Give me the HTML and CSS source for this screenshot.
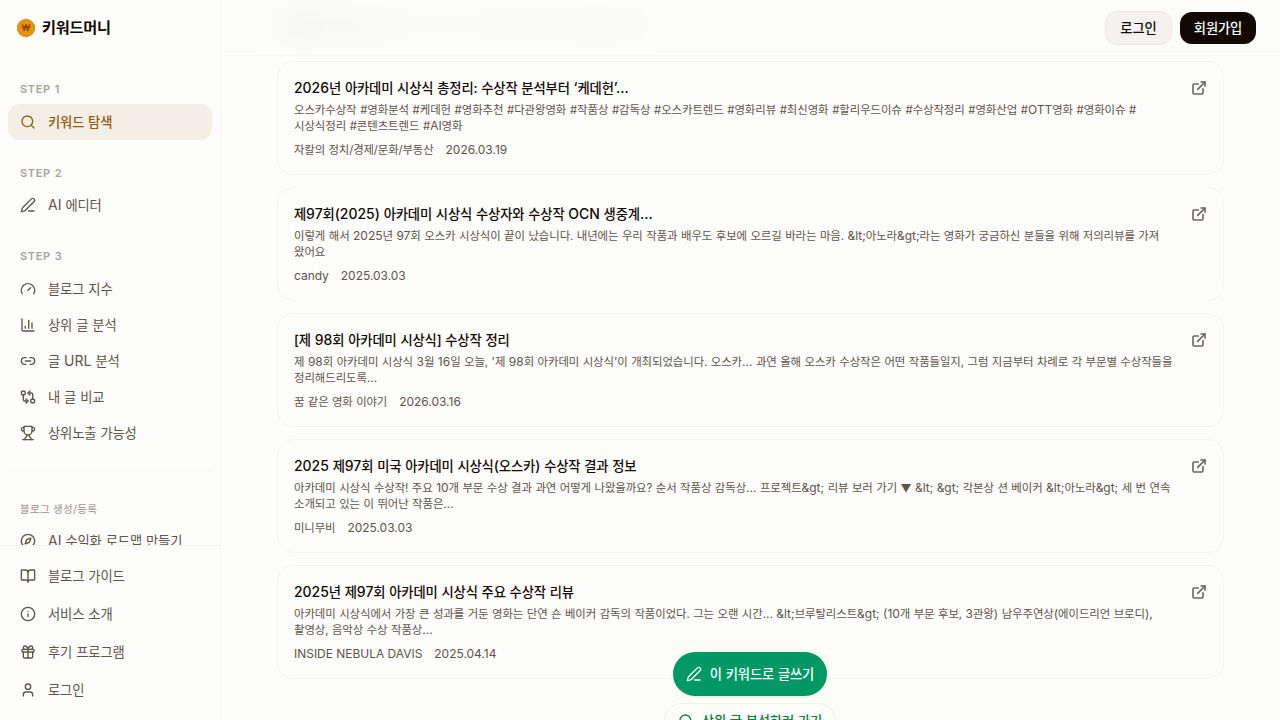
FILE: index.html
```
<!DOCTYPE html>
<html lang="ko">
<head>
    <meta charset="UTF-8">
    <title>키워드머니</title>
    <link rel="stylesheet" href="styles.css">
</head>
<body>
    <svg width="0" height="0" class="sprite">
        <symbol id="search" viewBox="0 0 24 24"><circle cx="11" cy="11" r="8"/><path d="m21 21-4.34-4.34"/></symbol>
        <symbol id="pen" viewBox="0 0 24 24"><path d="M13 21h8"/><path d="M21.174 6.812a1 1 0 0 0-3.986-3.987L3.842 16.174a2 2 0 0 0-.5.83l-1.321 4.352a.5.5 0 0 0 .623.622l4.353-1.32a2 2 0 0 0 .83-.497z"/></symbol>
        <symbol id="gauge" viewBox="0 0 24 24"><path d="m12 14 4-4"/><path d="M3.34 19a10 10 0 1 1 17.32 0"/></symbol>
        <symbol id="chart" viewBox="0 0 24 24"><path d="M3 3v16a2 2 0 0 0 2 2h16"/><path d="M18 17V9"/><path d="M13 17V5"/><path d="M8 17v-3"/></symbol>
        <symbol id="link" viewBox="0 0 24 24"><path d="M9 17H7A5 5 0 0 1 7 7h2"/><path d="M15 7h2a5 5 0 1 1 0 10h-2"/><path d="M8 12h8"/></symbol>
        <symbol id="compare" viewBox="0 0 24 24"><circle cx="5" cy="6" r="3"/><path d="M12 6h5a2 2 0 0 1 2 2v7"/><path d="m15 9-3-3 3-3"/><circle cx="19" cy="18" r="3"/><path d="M12 18H7a2 2 0 0 1-2-2V9"/><path d="m9 15 3 3-3 3"/></symbol>
        <symbol id="trophy" viewBox="0 0 24 24"><path d="M6 9H4.5a2.5 2.5 0 0 1 0-5H6"/><path d="M18 9h1.5a2.5 2.5 0 0 0 0-5H18"/><path d="M4 22h16"/><path d="M10 14.66V17c0 .55-.47.98-.97 1.21C7.85 18.75 7 20.24 7 22"/><path d="M14 14.66V17c0 .55.47.98.97 1.21C16.15 18.75 17 20.24 17 22"/><path d="M18 2H6v7a6 6 0 0 0 12 0V2Z"/></symbol>
        <symbol id="compass" viewBox="0 0 24 24"><circle cx="12" cy="12" r="10"/><path d="m16.24 7.76-1.804 5.411a2 2 0 0 1-1.265 1.265L7.76 16.24l1.804-5.411a2 2 0 0 1 1.265-1.265z"/></symbol>
        <symbol id="book" viewBox="0 0 24 24"><path d="M12 7v14"/><path d="M3 18a1 1 0 0 1-1-1V4a1 1 0 0 1 1-1h5a4 4 0 0 1 4 4 4 4 0 0 1 4-4h5a1 1 0 0 1 1 1v13a1 1 0 0 1-1 1h-6a3 3 0 0 0-3 3 3 3 0 0 0-3-3z"/></symbol>
        <symbol id="info" viewBox="0 0 24 24"><circle cx="12" cy="12" r="10"/><path d="M12 16v-4"/><path d="M12 8h.01"/></symbol>
        <symbol id="gift" viewBox="0 0 24 24"><rect x="3" y="8" width="18" height="4" rx="1"/><path d="M12 8v13"/><path d="M19 12v7a2 2 0 0 1-2 2H7a2 2 0 0 1-2-2v-7"/><path d="M7.5 8a2.5 2.5 0 0 1 0-5A4.8 8 0 0 1 12 8a4.8 8 0 0 1 4.5-5 2.5 2.5 0 0 1 0 5"/></symbol>
        <symbol id="user" viewBox="0 0 24 24"><path d="M19 21v-2a4 4 0 0 0-4-4H9a4 4 0 0 0-4 4v2"/><circle cx="12" cy="7" r="4"/></symbol>
        <symbol id="external" viewBox="0 0 24 24"><path d="M15 3h6v6"/><path d="M10 14 21 3"/><path d="M18 13v6a2 2 0 0 1-2 2H5a2 2 0 0 1-2-2V8a2 2 0 0 1 2-2h6"/></symbol>
    </svg>

    <aside class="sidebar">
        <div class="brand"><span class="coin">₩</span>키워드머니</div>
        <nav class="menu">
            <div class="label">STEP 1</div>
            <a class="item active"><svg class="icon"><use href="#search"/></svg>키워드 탐색</a>
            <div class="label tight">STEP 2</div>
            <a class="item"><svg class="icon"><use href="#pen"/></svg><span><span class="en">AI</span> 에디터</span></a>
            <div class="label">STEP 3</div>
            <a class="item"><svg class="icon"><use href="#gauge"/></svg>블로그 지수</a>
            <a class="item"><svg class="icon"><use href="#chart"/></svg>상위 글 분석</a>
            <a class="item"><svg class="icon"><use href="#link"/></svg><span>글 <span class="en">URL</span> 분석</span></a>
            <a class="item"><svg class="icon"><use href="#compare"/></svg>내 글 비교</a>
            <a class="item"><svg class="icon"><use href="#trophy"/></svg>상위노출 가능성</a>
            <hr class="divider">
            <div class="label ko">블로그 생성/등록</div>
            <a class="item"><svg class="icon"><use href="#compass"/></svg><span><span class="en">AI</span> 수익화 로드맵 만들기</span></a>
        </nav>
        <div class="bottom">
            <a class="item"><svg class="icon"><use href="#book"/></svg>블로그 가이드</a>
            <a class="item"><svg class="icon"><use href="#info"/></svg>서비스 소개</a>
            <a class="item"><svg class="icon"><use href="#gift"/></svg>후기 프로그램</a>
            <a class="item"><svg class="icon"><use href="#user"/></svg>로그인</a>
        </div>
    </aside>

    <main class="main">
        <header class="header">
            <div class="haze"></div>
            <button class="btn login">로그인</button>
            <button class="btn signup">회원가입</button>
        </header>
        <section class="posts">
            <article class="card">
                <div class="text">
                    <h3><span class="en">2026</span>년 아카데미 시상식 총정리: 수상작 분석부터 <span class="en">‘</span>케데헌<span class="en">’...</span></h3>
                    <p class="tags">오스카수상작 #영화분석 #케데헌 #영화추천 #다관왕영화 #작품상 #감독상 #오스카트렌드 #영화리뷰 #최신영화 #할리우드이슈 #수상작정리 #영화산업 #<span class="en">OTT</span>영화 #영화이슈 #<br>시상식정리 #콘텐츠트렌드 #<span class="en">AI</span>영화</p>
                    <div class="meta"><span>자칼의 정치/경제/문화/부동산</span><span class="en">2026.03.19</span></div>
                </div>
                <svg class="icon"><use href="#external"/></svg>
            </article>
            <article class="card">
                <div class="text">
                    <h3>제<span class="en">97</span>회<span class="en">(2025)</span> 아카데미 시상식 수상자와 수상작 <span class="en">OCN</span> 생중계<span class="en">...</span></h3>
                    <p>이렇게 해서 <span class="en">2025</span>년 <span class="en">97</span>회 오스카 시상식이 끝이 났습니다. 내년에는 우리 작품과 배우도 후보에 오르길 바라는 마음. <span class="en">&amp;lt;</span>아노라<span class="en">&amp;gt;</span>라는 영화가 궁금하신 분들을 위해 저의리뷰를 가져<br>왔어요</p>
                    <div class="meta"><span class="en">candy</span><span class="en">2025.03.03</span></div>
                </div>
                <svg class="icon"><use href="#external"/></svg>
            </article>
            <article class="card">
                <div class="text">
                    <h3>[제 <span class="en">98</span>회 아카데미 시상식] 수상작 정리</h3>
                    <p>제 <span class="en">98</span>회 아카데미 시상식 <span class="en">3</span>월 <span class="en">16</span>일 오늘, '제 <span class="en">98</span>회 아카데미 시상식'이 개최되었습니다. 오스카<span class="en">...</span> 과연 올해 오스카 수상작은 어떤 작품들일지, 그럼 지금부터 차례로 각 부문별 수상작들을<br>정리해드리도록<span class="en">...</span></p>
                    <div class="meta"><span>꿈 같은 영화 이야기</span><span class="en">2026.03.16</span></div>
                </div>
                <svg class="icon"><use href="#external"/></svg>
            </article>
            <article class="card">
                <div class="text">
                    <h3><span class="en">2025</span> 제<span class="en">97</span>회 미국 아카데미 시상식<span class="en">(</span>오스카<span class="en">)</span> 수상작 결과 정보</h3>
                    <p>아카데미 시상식 수상작! 주요 <span class="en">10</span>개 부문 수상 결과 과연 어떻게 나왔을까요? 순서 작품상 감독상<span class="en">...</span> 프로젝트<span class="en">&amp;gt;</span> 리뷰 보러 가기 <span class="mark">▼</span> <span class="en">&amp;lt; &amp;gt;</span> 각본상 션 베이커 <span class="en">&amp;lt;</span>아노라<span class="en">&amp;gt;</span> 세 번 연속<br>소개되고 있는 이 뛰어난 작품은<span class="en">...</span></p>
                    <div class="meta"><span>미니무비</span><span class="en">2025.03.03</span></div>
                </div>
                <svg class="icon"><use href="#external"/></svg>
            </article>
            <article class="card">
                <div class="text">
                    <h3><span class="en">2025</span>년 제<span class="en">97</span>회 아카데미 시상식 주요 수상작 리뷰</h3>
                    <p>아카데미 시상식에서 가장 큰 성과를 거둔 영화는 단연 숀 베이커 감독의 작품이었다. 그는 오랜 시간<span class="en">... &amp;lt;</span>브루탈리스트<span class="en">&amp;gt; (10</span>개 부문 후보, <span class="en">3</span>관왕<span class="en">)</span> 남우주연상<span class="en">(</span>에이드리언 브로디<span class="en">),</span><br>촬영상, 음악상 수상 작품상<span class="en">...</span></p>
                    <div class="meta"><span class="en">INSIDE NEBULA DAVIS</span><span class="en">2025.04.14</span></div>
                </div>
                <svg class="icon"><use href="#external"/></svg>
            </article>
        </section>
    </main>

    <div class="floating">
        <button class="pill write"><svg class="icon"><use href="#pen"/></svg>이 키워드로 글쓰기</button>
        <button class="pill analyze"><svg class="icon"><use href="#search"/></svg>상위 글 분석하러 가기</button>
    </div>
</body>
</html>
```
FILE: styles.css
```
* {
    box-sizing: border-box;
}

body {
    margin: 0;
    height: 720px;
    display: flex;
    overflow: hidden;
    background-color: #fcfcfa;
    color: #110a04;
    font-family: Inter, "Noto Sans CJK KR", sans-serif;
    font-size: 13.3px;
    line-height: 20px;
    letter-spacing: -0.01em;
    word-spacing: 0.03em;
}

/* latin letters and digits run a little larger than hangul */
.en {
    font-size: 1.05em;
    letter-spacing: 0;
    word-spacing: 0;
}

.mark {
    font-size: 0.95em;
    line-height: 1;
}

.sprite {
    position: absolute;
}

.icon {
    width: 16px;
    height: 16px;
    flex-shrink: 0;
    fill: none;
    stroke: currentColor;
    stroke-width: 2;
    stroke-linecap: round;
    stroke-linejoin: round;
}

.sidebar {
    width: 221px;
    height: 720px;
    flex-shrink: 0;
    display: flex;
    flex-direction: column;
    border-right: 1px solid #f7f7f5;
}

.brand {
    height: 56px;
    flex-shrink: 0;
    display: flex;
    align-items: center;
    gap: 7px;
    padding-left: 17px;
    font-size: 15.2px;
    font-weight: 700;
    letter-spacing: -0.015em;
}

.coin {
    width: 18px;
    height: 18px;
    border-radius: 50%;
    background-color: #e6930f;
    box-shadow: inset 0 0 0 1px #dc8a10;
    color: #8a4708;
    font-size: 8.5px;
    line-height: 18px;
    text-align: center;
    letter-spacing: 0;
}

.menu {
    flex: 1;
    min-height: 0;
    overflow: hidden;
    padding: 0 8px;
}

.label {
    padding: 25px 12px 7px;
    color: #a8a49c;
    font-size: 11px;
    font-weight: 600;
    line-height: 16px;
    letter-spacing: 0.06em;
}

.label.tight {
    padding-bottom: 6px;
}

.label.ko {
    padding: 26px 12px 5px;
    font-size: 10.5px;
    font-weight: 500;
    letter-spacing: 0.03em;
    word-spacing: 0;
}

.item {
    height: 36px;
    display: flex;
    align-items: center;
    gap: 12px;
    padding: 0 12px;
    border-radius: 12px;
    color: #5c5549;
}

.item.active {
    background-color: #f3eee6;
    color: #945b09;
    font-weight: 500;
}

.divider {
    height: 1px;
    margin: 20px 0 4px;
    border: none;
    background-color: #f6f6f4;
}

.bottom {
    display: flex;
    flex-direction: column;
    gap: 2px;
    padding: 12px 8px;
    border-top: 1px solid #f4f4f2;
}

.main {
    flex: 1;
    min-width: 0;
}

.header {
    position: relative;
    height: 56px;
    display: flex;
    align-items: center;
    justify-content: flex-end;
    gap: 8px;
    padding-right: 24px;
    border-bottom: 1px solid #f7f7f5;
    overflow: hidden;
}

/* content scrolled under the translucent header */
.haze {
    position: absolute;
    left: 60px;
    top: 14px;
    width: 360px;
    height: 22px;
    background: linear-gradient(90deg, #f4f4f2, #f9f9f7 40%, #f7f7f5);
    filter: blur(12px);
}

.btn {
    border: none;
    border-radius: 12px;
    padding: 0;
    font: inherit;
    font-weight: 500;
    letter-spacing: inherit;
}

.login {
    width: 67px;
    height: 34px;
    border: 1px solid #e9e8e4;
    background-color: #f3f2ef;
    color: #110a04;
}

.signup {
    width: 76px;
    height: 32px;
    background-color: #110a04;
    color: #fcfcfa;
}

.posts {
    display: flex;
    flex-direction: column;
    gap: 12px;
    padding: 5px 56px;
}

.card {
    height: 114px;
    display: flex;
    justify-content: space-between;
    padding: 16px;
    border: 1px solid #f4f4f2;
    border-radius: 16px;
    color: #5c5549;
    white-space: nowrap;
}

.card .icon {
    margin-top: 2px;
    color: #6b6459;
    stroke-width: 2.4;
}

.card h3 {
    margin: 0 0 4px;
    color: #110a04;
    font-size: 13.3px;
    font-weight: 500;
}

.card p {
    margin: 0 0 8px;
    font-size: 11.4px;
    line-height: 16px;
    letter-spacing: -0.006em;
    word-spacing: 0.032em;
}

.card p.tags {
    word-spacing: 0.046em;
}

.meta {
    display: flex;
    gap: 12px;
    font-size: 11.4px;
    line-height: 16px;
}

.floating {
    position: absolute;
    left: 221px;
    right: 1px;
    top: 652px;
    height: 68px;
    display: flex;
    flex-direction: column;
    align-items: center;
    gap: 7px;
    overflow: hidden;
}

.pill {
    height: 44px;
    flex-shrink: 0;
    display: flex;
    align-items: center;
    justify-content: center;
    gap: 8px;
    padding: 0;
    border: none;
    border-radius: 22px;
    font: inherit;
    font-weight: 500;
    letter-spacing: inherit;
    word-spacing: inherit;
}

.write {
    width: 154px;
    background-color: #009966;
    color: #fcfcfa;
    box-shadow: 0 1px 3px rgba(0, 0, 0, 0.08);
}

.analyze {
    width: 172px;
    height: 36px;
    border: 1px solid #f0f0ee;
    background-color: #fcfcfa;
    color: #0a8043;
}
```
